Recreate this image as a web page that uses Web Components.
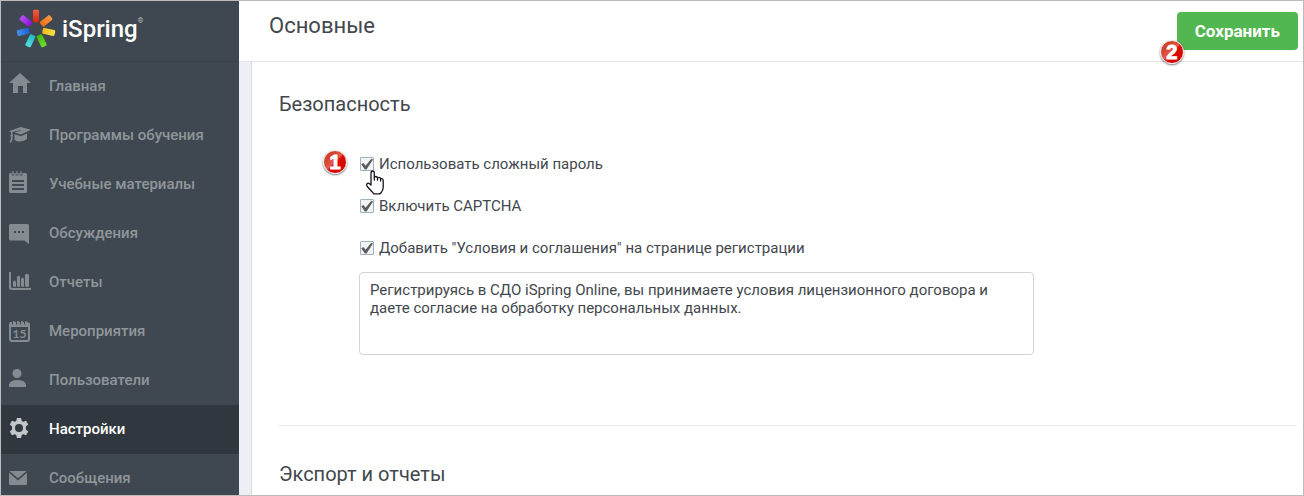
<!DOCTYPE html>
<html lang="ru">
<head>
<meta charset="utf-8">
<title>Основные</title>
<style>
  body { margin: 0; font-family: Roboto, "Liberation Sans", sans-serif; font-size: 15px; color: #42474d; background: #fff; }
</style>
</head>
<body>
<app-shell>
  <side-bar slot="sidebar">
    <nav-item icon="home">Главная</nav-item>
    <nav-item icon="cap">Программы обучения</nav-item>
    <nav-item icon="notes">Учебные материалы</nav-item>
    <nav-item icon="chat">Обсуждения</nav-item>
    <nav-item icon="chart">Отчеты</nav-item>
    <nav-item icon="calendar">Мероприятия</nav-item>
    <nav-item icon="user">Пользователи</nav-item>
    <nav-item icon="gear" active>Настройки</nav-item>
    <nav-item icon="mail">Сообщения</nav-item>
  </side-bar>
  <page-header slot="header" heading="Основные">
    <save-button>Сохранить</save-button>
  </page-header>
  <settings-section heading="Безопасность">
    <check-option label="Использовать сложный пароль" step="1" pointed></check-option>
    <check-option label="Включить CAPTCHA"></check-option>
    <check-option label="Добавить &quot;Условия и соглашения&quot; на странице регистрации"></check-option>
    <terms-field label="Условия и соглашения">Регистрируясь в СДО iSpring Online, вы принимаете условия лицензионного договора и даете согласие на обработку персональных данных.</terms-field>
  </settings-section>
  <settings-section heading="Экспорт и отчеты"></settings-section>
</app-shell>

<script>
const define = (name, render) => customElements.define(name, class extends HTMLElement {
  connectedCallback() {
    if (this.shadowRoot) return;
    const t = document.createElement('template');
    t.innerHTML = render(this);
    this.attachShadow({ mode: 'open' }).append(t.content.cloneNode(true));
  }
});
const attr = (el, name) => (el.getAttribute(name) || '').replace(/&/g, '&amp;').replace(/"/g, '&quot;').replace(/</g, '&lt;');

const icons = {
  home: '<path d="M12 1 1 11h4v10h5v-7h5v7h4V11h4z"/>',
  cap: '<path d="M1 10.3 12.5 6 23 8.8 13 13.6 6.4 11.4l6.6-1.9-.3-.6-8.2 2.2v2.5c.8.5.8 1.5 0 2.1.3 2.3-.2 4.3-1.6 6L1.4 21c1.3-1.7 1.7-3.400 1.500-5.300-.8-.6-.7-1.600.1-2.100v-2.500z"/><path d="M6.500 13.300 13 15.300l6-2.800v5c-1.600 2.900-9.400 4.600-12.500 1.300z"/>',
  notes: '<path fill-rule="evenodd" d="M2.500 3h1.200v2.500h2.600V3h1.400v2.500h2.600V3h1.400v2.500h2.600V3h3.200Q19 3 19 4.500v17q0 1.500-1.500 1.500h-15Q1 23 1 21.500v-17Q1 3 2.500 3M4 10v2h12v-2zm0 4v2h12v-2zm0 4v2h12v-2z"/><path d="M4.300 1.300h1.400v3.500H4.300zM8.300 1.300h1.400v3.500H8.300zM12.300 1.300h1.400v3.500h-1.400z"/>',
  chat: '<path fill-rule="evenodd" d="M2.500 5h17Q21 5 21 6.500V25l-4.500-3.500h-14Q1 21.500 1 20V6.500Q1 5 2.500 5M6 12v2h2v-2zm4 0v2h2v-2zm4 0v2h2v-2z"/>',
  chart: '<path d="M1 4h2v14.500q0 1.500 1.500 1.500H23v2H3.500Q1 22 1 19.500z"/><path d="M5 14q1.500-3 3 0v4.800H5zM9 9q1.500-2.500 3 0v9.800H9zM13 11q1.500-2.500 3 0v7.800h-3zM17 7q1.500-2.500 4 0v11.800h-4z"/>',
  calendar: '<path fill-rule="evenodd" d="M3 5h16q3 0 3 3v14q0 3-3 3H4q-3 0-3-3V8q0-3 2-3m0 5v11.500Q3 23 4.500 23h14q1.500 0 1.500-1.500V10z"/><g fill="none" stroke="#3f4850" stroke-width="1"><path d="M4.500 4v3.500M8.500 4v3.500M12.500 4v3.500M16.500 4v3.500"/></g><path d="M5.200 4h1.500v3H5.200zM9.200 4h1.500v3H9.200zM13.200 4h1.500v3h-1.500zM17.200 4h1.500v3h-1.500z"/><text x="11.500" y="21" text-anchor="middle" font-size="12" font-weight="700" font-family="Lato, sans-serif">15</text>',
  user: '<circle cx="9" cy="7.500" r="4.500"/><path d="M1 21v-2.500Q2 14 9.500 14T18 18.500V21z"/>',
  gear: '<path fill-rule="evenodd" d="M8.900 3h4.200l.6 2.900 1.500.9 2.900-1 2.100 3.700-2.300 1.900v3.200l2.300 1.900-2.100 3.700-2.900-1-1.500.9-.6 2.900H8.900l-.6-2.900-1.500-.9-2.900 1-2.100-3.700 2.300-1.900v-3.200L1.800 9.500l2.100-3.700 2.900 1 1.500-.9zM11 9a4 4 0 1 0 0 8 4 4 0 0 0 0-8"/>',
  mail: '<path d="M1 8.700 10 16.500l9-7.800v11q0 1.300-1.300 1.300H2.300Q1 21 1 19.700z"/><path d="M1.400 7h17.200L10 14.300z"/>'
};

const petals = [['#f0604a', '#d8230c'], ['#f79a45', '#f26a10'], ['#f8de4c', '#f0bd16'], ['#74da30', '#3fb80c'], ['#55dde0', '#20b8c2'], ['#4690ec', '#1a5fd0'], ['#bb50f5', '#8c12dc']];

define('app-shell', () => `
  <style>
    :host { display: grid; grid-template-columns: 238px minmax(0, 1fr); height: 100vh; box-sizing: border-box; border: 1px solid #bcbcbc; overflow: hidden; }
    .page { display: grid; grid-template-rows: auto minmax(0, 1fr); min-height: 0; }
    main { margin-left: 12px; border-left: 1px solid #d8d9dc; padding: 0 6px 0 27px; background: #fff; overflow: hidden; }
    .body { background: #eeeff4; display: grid; min-height: 0; }
    ::slotted(side-bar) { min-height: 0; }
  </style>
  <slot name="sidebar"></slot>
  <div class="page"><slot name="header"></slot><div class="body"><main><slot></slot></main></div></div>`);

define('brand-logo', () => `
  <style>
    :host { display: block; }
    a { display: flex; align-items: center; gap: 6px; color: #fff; text-decoration: none; font-size: 24px; line-height: 28px; font-weight: 500; }
    svg { width: 40px; height: 40px; }
    sup { font-size: 7px; line-height: 8px; align-self: flex-start; padding-top: 8px; color: #b8bdc1; margin-left: -6px; }
  </style>
  <a href="#">
    <svg viewBox="-20 -20 40 40" aria-hidden="true">
      <defs>${petals.map(([a, b], i) => `<linearGradient id="p${i}" x2="0" y2="1"><stop stop-color="${a}"/><stop offset="1" stop-color="${b}"/></linearGradient>`).join('')}</defs>
      ${petals.map((c, i) => `<rect x="-3" y="-19.300" width="6" height="12.500" rx="1.300" fill="url(#p${i})" transform="rotate(${i * 360 / 7})"/>`).join('')}
    </svg>
    <span>iSpring</span><sup>®</sup>
  </a>`);

define('side-bar', () => `
  <style>
    :host { display: block; background: #3f4850; overflow: hidden; }
    header { height: 61px; box-sizing: border-box; padding: 8px 0 0 15px; border-bottom: 1px solid #394149; }
  </style>
  <header><brand-logo></brand-logo></header>
  <nav><slot></slot></nav>`);

define('nav-item', el => `
  <style>
    :host { display: block; color: #8f969b; --glyph: #858c91; }
    :host([active]) { color: #fff; background: #31373e; --glyph: #c3c6c8; }
    a { display: flex; align-items: center; gap: 17px; height: 49px; padding-left: 7px; color: inherit; text-decoration: none; font-weight: 500; }
    svg { width: 24px; height: 29px; fill: var(--glyph); flex: none; }
    span { padding-bottom: 2px; }
  </style>
  <a href="#"${el.hasAttribute('active') ? ' aria-current="page"' : ''}>
    <svg viewBox="0 0 24 29" aria-hidden="true">${icons[el.getAttribute('icon')]}</svg><span><slot></slot></span>
  </a>`);

define('page-header', el => `
  <style>
    :host { display: flex; justify-content: space-between; align-items: flex-start; padding: 11px 5px 11px 30px; border-bottom: 1px solid #e3e4e6; background: #fff; }
    h1 { margin: 0; font-size: 22px; line-height: 28px; font-weight: 400; }
  </style>
  <h1>${attr(el, 'heading')}</h1><slot></slot>`);

define('save-button', () => `
  <style>
    :host { display: block; position: relative; }
    button { display: block; height: 38px; padding: 0 18px; border: 0; border-radius: 4px; background: #52b651; color: #fff; font: 700 17px/38px Roboto, "Liberation Sans", sans-serif; }
    step-badge { position: absolute; left: -17px; bottom: -14px; }
  </style>
  <button type="button"><slot></slot></button><step-badge n="2"></step-badge>`);

define('step-badge', el => `
  <style>
    :host { display: block; width: 22px; height: 22px; border: 1px solid #e9e9e9; border-radius: 50%; background: linear-gradient(135deg, #d3432c 0 25%, #e4594a 48%, #dc0d08 54%, #d50000); box-shadow: 0 1px 2px #0008; color: #fff; font: 700 20px/22px "Liberation Sans", sans-serif; text-align: center; -webkit-text-stroke: 1px #fff; }
  </style>${attr(el, 'n')}`);

define('settings-section', el => `
  <style>
    :host { display: block; padding-bottom: 70px; border-bottom: 1px solid #ededed; }
    :host(:last-of-type) { border: 0; }
    h2 { margin: 0; padding-top: 28px; font-size: 20px; line-height: 28px; font-weight: 400; }
    :host(:last-of-type) h2 { padding-top: 34px; }
    .fields { padding: 25px 263px 0 80px; }
  </style>
  <section><h2>${attr(el, 'heading')}</h2><div class="fields"><slot></slot></div></section>`);

define('check-option', el => `
  <style>
    :host { display: block; position: relative; }
    label { display: flex; align-items: center; gap: 5px; height: 42px; padding-left: 1px; }
    input { appearance: none; width: 14px; height: 14px; margin: 0; border: 1px solid #9db2bf; border-radius: 1px; background: #f3f4f5; }
    input:checked::before { content: ""; display: block; width: 12px; height: 12px; background: #5c5c5c; clip-path: polygon(2% 52%, 20% 42%, 38% 64%, 86% 6%, 100% 12%, 46% 96%, 32% 96%); }
    step-badge { position: absolute; left: -36px; top: 7px; }
    .hand { position: absolute; left: 6px; top: 27px; width: 20px; height: 26px; z-index: 1; }
  </style>
  <label><input type="checkbox" checked><span>${attr(el, 'label')}</span></label>
  ${el.hasAttribute('step') ? `<step-badge n="${attr(el, 'step')}"></step-badge>` : ''}
  ${el.hasAttribute('pointed') ? `<svg class="hand" viewBox="0 0 20 26" aria-hidden="true"><path fill="#fff" stroke="#15151f" stroke-width="1.300" stroke-linejoin="round" stroke-linecap="round" d="M6 15V3.200Q6 1 7.700 1T9.300 3.200V10 7.800q0-1.300 1.500-1.300t1.700 1.500V10 8.300q0-1 1.500-1t1.600 1.500V11 9.500q0-1 1.300-.9t1.300 1.800V17.500q0 2.200-1.800 4.700l-1.400 1.600H8.800L7 21.700 2.200 16.500Q1 14.800 2 13.700t2.600 0z"/></svg>` : ''}`);

define('terms-field', el => `
  <style>
    :host { display: block; padding-top: 3px; }
    textarea { display: block; box-sizing: border-box; width: 100%; height: 83px; padding: 8px 10px; border: 1px solid #d3d3d3; border-radius: 4px; background: #fff; color: inherit; font: inherit; line-height: 18px; resize: none; overflow: hidden; }
  </style>
  <textarea aria-label="${attr(el, 'label')}">${el.textContent}</textarea>`);
</script>
</body>
</html>
